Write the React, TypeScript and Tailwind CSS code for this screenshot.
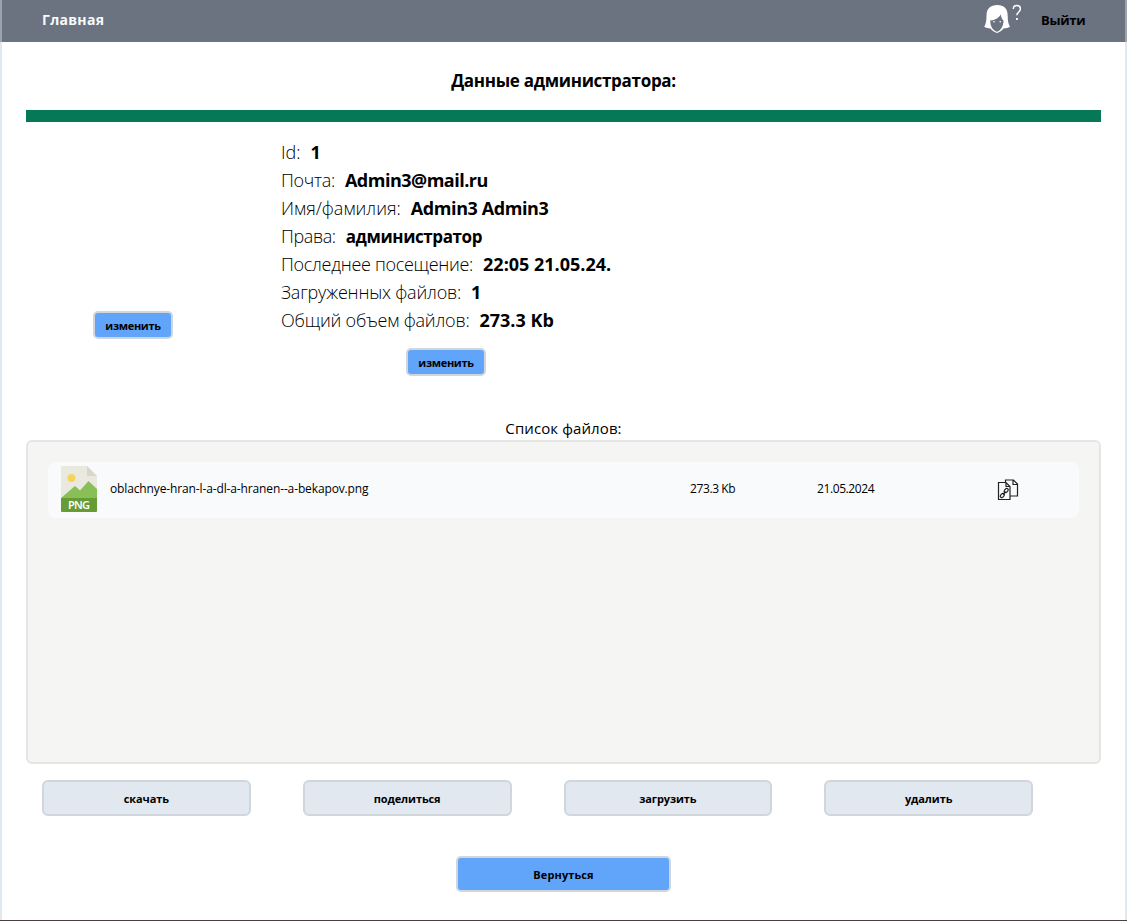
const info = [
  { label: "Id:", value: "1", labelStyle: "", valueStyle: "text-lg" },
  { label: "Почта:", value: "Admin3@mail.ru", labelStyle: "tracking-[-0.3px]", valueStyle: "text-lg tracking-[-0.5px]" },
  { label: "Имя/фамилия:", value: "Admin3 Admin3", labelStyle: "", valueStyle: "text-lg tracking-[-0.4px]" },
  { label: "Права:", value: "администратор", labelStyle: "tracking-[-0.4px]", valueStyle: "text-[17px] leading-[30px] tracking-[-0.4px]" },
  { label: "Последнее посещение:", value: "22:05 21.05.24.", labelStyle: "tracking-[-0.3px]", valueStyle: "text-lg" },
  { label: "Загруженных файлов:", value: "1", labelStyle: "tracking-[-0.2px]", valueStyle: "text-lg" },
  { label: "Общий объем файлов:", value: "273.3 Kb", labelStyle: "tracking-[-0.2px]", valueStyle: "text-lg" },
];

const actions = ["скачать", "поделиться", "загрузить", "удалить"];

function AvatarIcon() {
  return (
    <svg width="42" height="36" viewBox="0 0 42 36" className="block">
      <path
        fill="#fff"
        d="M17.300 5c-3.500 0-6 .9-8 2.800C7.300 9.700 6.600 12 6.500 16c-.1 5-.6 8-2.300 10.800 1.700 1.200 3.800 1.700 6.300 1.700 1.600 2.100 3.900 3.700 6.500 4.500 2.600-.8 4.900-2.400 6.500-4.500 2.500 0 4.600-.5 6.500-1.700-1.700-3-2.200-5.800-2.300-10.800-.1-4-.9-6.400-2.700-8.200C23.100 5.900 20.700 5 17.300 5z"
      />
      <path
        fill="#6b7280"
        d="M20.800 14.500c-2.300 3.800-5.700 5.800-10.600 6.100.1 3.300.7 5.400 1.900 7.400 1.200 1.900 2.800 3 4.900 3.800 2-.8 3.600-2.200 4.700-4.100 1.200-2.100 1.900-4.700 1.800-7.100-1.500-1.300-2.300-3.300-2.700-6.100z"
      />
      <circle cx="14" cy="21.800" r="0.800" fill="#fff" />
      <circle cx="20.200" cy="21.800" r="0.800" fill="#fff" />
      <path d="M33.300 9c0-2.300 1.400-3.500 3.500-3.500s3.600 1.300 3.600 3.400c0 3-3.500 3.100-3.500 6.400" fill="none" stroke="#fff" strokeWidth="1.500" />
      <rect x="36" y="18" width="1.800" height="2" fill="#fff" />
    </svg>
  );
}

function PngIcon() {
  return (
    <svg width="36" height="46" viewBox="0 0 36 46" className="block">
      <path d="M1 0h25l10 10v22H0V1a1 1 0 0 1 1-1z" fill="#e9e9e0" />
      <path d="M26 0l10 10H26z" fill="#d9d7ca" />
      <circle cx="10.500" cy="12" r="3.900" fill="#f3d55b" />
      <path d="M0 32l14-12 5 4.500L27.500 15 36 23v10H0z" fill="#88c057" />
      <path d="M0 32h36v13a1 1 0 0 1-1 1H1a1 1 0 0 1-1-1z" fill="#659c35" />
      <text x="18" y="43" textAnchor="middle" textLength="22" lengthAdjust="spacing" fill="#fff" fontFamily="Noto Sans, sans-serif" fontSize="11" fontWeight="600">
        PNG
      </text>
    </svg>
  );
}

function CopyLinkIcon() {
  return (
    <svg width="22" height="22" viewBox="0 0 22 22" className="block" fill="none" stroke="#222" strokeWidth="1.200">
      <path d="M8.500 3V1h8l4 4v12h-7.500M16 1v4.500h4.500" />
      <path d="M1.500 3.500h7.500l4 4v13H1.500zM9 3.500v4h4" />
      <rect x="6.900" y="10" width="4.600" height="3" rx="1.500" transform="rotate(-48 9.200 11.500)" />
      <rect x="3" y="15" width="4.600" height="3" rx="1.500" transform="rotate(-48 5.300 16.500)" />
      <path d="M6 15.500l2.500-3" strokeWidth="1.500" />
    </svg>
  );
}

function EditButton() {
  return (
    <button className="flex h-7 w-20 items-center justify-center rounded-[5px] border-2 border-gray-300 bg-[#60a5fa] pt-0.5 text-[11px] leading-4 font-bold tracking-[-0.3px]">
      изменить
    </button>
  );
}

export default function App() {
  return (
    <div className="flex h-[921px] w-full flex-col border-b border-[#4b4145] bg-white font-['Open_Sans','Noto_Sans',sans-serif] text-black">
      <header className="flex h-[42px] shrink-0 items-center border-x-2 border-[#9ca3af] bg-[#6b7280] pr-10 pl-10">
        <a className="pb-0.5 text-sm font-bold tracking-[0.3px] text-slate-50">Главная</a>
        <div className="ml-auto flex h-full items-start">
          <AvatarIcon />
        </div>
        <a className="ml-[19px] w-11 text-[13px] font-bold tracking-[-0.3px]">Выйти</a>
      </header>
      <main className="flex flex-1 flex-col border-x-2 border-[#e2e8f0] px-6">
        <h1 className="mt-[25px] text-center text-[17px] leading-7 font-bold tracking-[-0.3px]">Данные администратора:</h1>
        <div className="mt-[15px] h-3 shrink-0 bg-[#047857]" />
        <section className="mt-4 flex h-[238px] shrink-0">
          <div className="flex w-[255px] flex-col pt-[173px] pl-[67px]">
            <EditButton />
          </div>
          <div>
            <dl>
              {info.map(({ label, value, labelStyle, valueStyle }) => (
                <div key={label} className="flex h-7 gap-2.5">
                  <dt className={`text-lg leading-7 font-light ${labelStyle}`}>{label}</dt>
                  <dd className={`font-bold ${valueStyle}`}>{value}</dd>
                </div>
              ))}
            </dl>
            <div className="mt-3.5 pl-[125px]">
              <EditButton />
            </div>
          </div>
        </section>
        <h2 className="mt-10 h-6 shrink-0 text-center text-[15px] leading-6 tracking-[0.1px]">Список файлов:</h2>
        <section className="h-[324px] shrink-0 rounded-md border-2 border-[#e5e5e5] bg-[#f5f5f4] px-5 pt-5">
          <div className="flex h-14 items-center rounded-lg bg-slate-50 pb-0.5 text-xs">
            <div className="pl-[13px]">
              <PngIcon />
            </div>
            <span className="ml-[13px] w-[580px] tracking-[-0.13px]">oblachnye-hran-l-a-dl-a-hranen--a-bekapov.png</span>
            <span className="w-[127px] tracking-[-0.4px]">273.3 Kb</span>
            <span className="w-[180px] tracking-[-0.4px]">21.05.2024</span>
            <div className="pt-0.5">
              <CopyLinkIcon />
            </div>
          </div>
        </section>
        <div className="mt-4 flex gap-[52px] pl-4">
          {actions.map((label) => (
            <button key={label} className="h-9 w-[208.75px] rounded-md border-2 border-gray-300 bg-[#e2e8f0] pt-0.5 text-[11px] font-bold tracking-[-0.1px]">
              {label}
            </button>
          ))}
        </div>
        <button className="mt-10 h-9 w-[215px] shrink-0 self-center rounded-[5px] border-2 border-gray-300 bg-[#60a5fa] pt-0.5 text-[11px] font-bold tracking-[0.1px]">
          Вернуться
        </button>
      </main>
    </div>
  );
}
